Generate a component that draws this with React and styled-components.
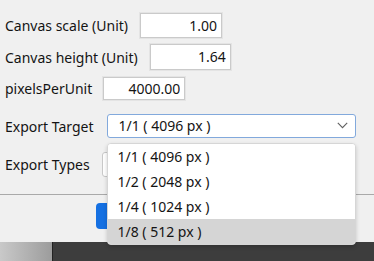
import React from 'react';
import styled, { createGlobalStyle } from 'styled-components';

const GlobalStyle = createGlobalStyle`
  html, body {
    margin: 0;
    padding: 0;
    background: #f0f0f0;
  }
  * {
    box-sizing: border-box;
  }
`;

const Window = styled.div`
  width: 374px;
  height: 261px;
  display: flex;
  flex-direction: column;
  background: #f0f0f0;
  font-family: 'Noto Sans', 'Open Sans', sans-serif;
  font-size: 14px;
  color: #141414;
  overflow: hidden;
`;

const Content = styled.div`
  height: 194px;
  padding: 13px 0 0 5px;
  display: flex;
  flex-direction: column;
`;

const Row = styled.div`
  display: flex;
  align-items: center;
  gap: ${(p) => p.$gap || 12}px;
  height: ${(p) => p.$h}px;
  margin-top: ${(p) => p.$mt || 0}px;
`;

const Label = styled.span`
  white-space: nowrap;
`;

const NumberInput = styled.input`
  width: ${(p) => p.$w || 82}px;
  height: 100%;
  border: 1px solid #cacaca;
  outline: 1px solid #e4e4e4;
  background: #fff;
  font: inherit;
  color: #141414;
  text-align: right;
  padding: 0 4px 1px 0;
`;

const SelectWrap = styled.div`
  position: relative;
  width: ${(p) => p.$w}px;
  height: 100%;
`;

const SelectBox = styled.div`
  height: 100%;
  display: flex;
  align-items: center;
  justify-content: space-between;
  padding: 0 7px 1px 10px;
  background: #fff;
  border: 1px solid ${(p) => (p.$open ? '#82a9dc' : '#c8c8c8')};
  border-radius: 3px;
`;

const List = styled.ul`
  position: absolute;
  left: 0;
  top: calc(100% + 5px);
  width: 100%;
  margin: 0;
  padding: 0;
  list-style: none;
  background: #fff;
  border: 1px solid #d6d6d6;
  border-radius: 4px;
  box-shadow: 0 2px 4px rgba(0, 0, 0, 0.18);
  overflow: hidden;
  z-index: 5;
`;

const Item = styled.li`
  height: 25px;
  display: flex;
  align-items: center;
  padding: 0 0 1px 9px;
  background: ${(p) => (p.$active ? '#d5d5d5' : '#fff')};
`;

const Separator = styled.div`
  height: 1px;
  background: #a9a9a9;
`;

const Footer = styled.div`
  height: 47px;
  padding: 8px 0 0 96px;
`;

const PrimaryButton = styled.div`
  width: 90px;
  height: 26px;
  border-radius: 4px;
  background: #1570e2;
`;

const BottomStrip = styled.div`
  flex: 1;
  display: flex;
  background: #3d3d3d;
`;

const Thumb = styled.div`
  width: 53px;
  background: linear-gradient(90deg, #c9c9c9, #9c9c9c);
  border-right: 1px solid #222;
`;

const Chevron = () => (
  <svg width="11" height="7" viewBox="0 0 11 7" fill="none">
    <path d="M0.8 0.8 L5.5 5.6 L10.2 0.8" stroke="#606060" strokeWidth="1.1" />
  </svg>
);

const options = ['1/1 ( 4096 px )', '1/2 ( 2048 px )', '1/4 ( 1024 px )', '1/8 ( 512 px )'];

export default function App() {
  return (
    <Window>
      <GlobalStyle />
      <Content>
        <Row $h={25}>
          <Label>Canvas scale (Unit)</Label>
          <NumberInput defaultValue="1.00" />
        </Row>
        <Row $h={26} $mt={6}>
          <Label>Canvas height (Unit)</Label>
          <NumberInput $w={81} defaultValue="1.64" />
        </Row>
        <Row $h={23} $mt={7} $gap={11}>
          <Label>pixelsPerUnit</Label>
          <NumberInput defaultValue="4000.00" />
        </Row>
        <Row $h={24} $mt={14} $gap={14}>
          <Label>Export Target</Label>
          <SelectWrap $w={249}>
            <SelectBox $open>
              <span>{options[0]}</span>
              <Chevron />
            </SelectBox>
            <List>
              {options.map((o, i) => (
                <Item key={o} $active={i === 3}>{o}</Item>
              ))}
            </List>
          </SelectWrap>
        </Row>
        <Row $h={25} $mt={14}>
          <Label>Export Types</Label>
          <SelectWrap $w={253}>
            <SelectBox />
          </SelectWrap>
        </Row>
      </Content>
      <Separator />
      <Footer>
        <PrimaryButton />
      </Footer>
      <BottomStrip>
        <Thumb />
      </BottomStrip>
    </Window>
  );
}
